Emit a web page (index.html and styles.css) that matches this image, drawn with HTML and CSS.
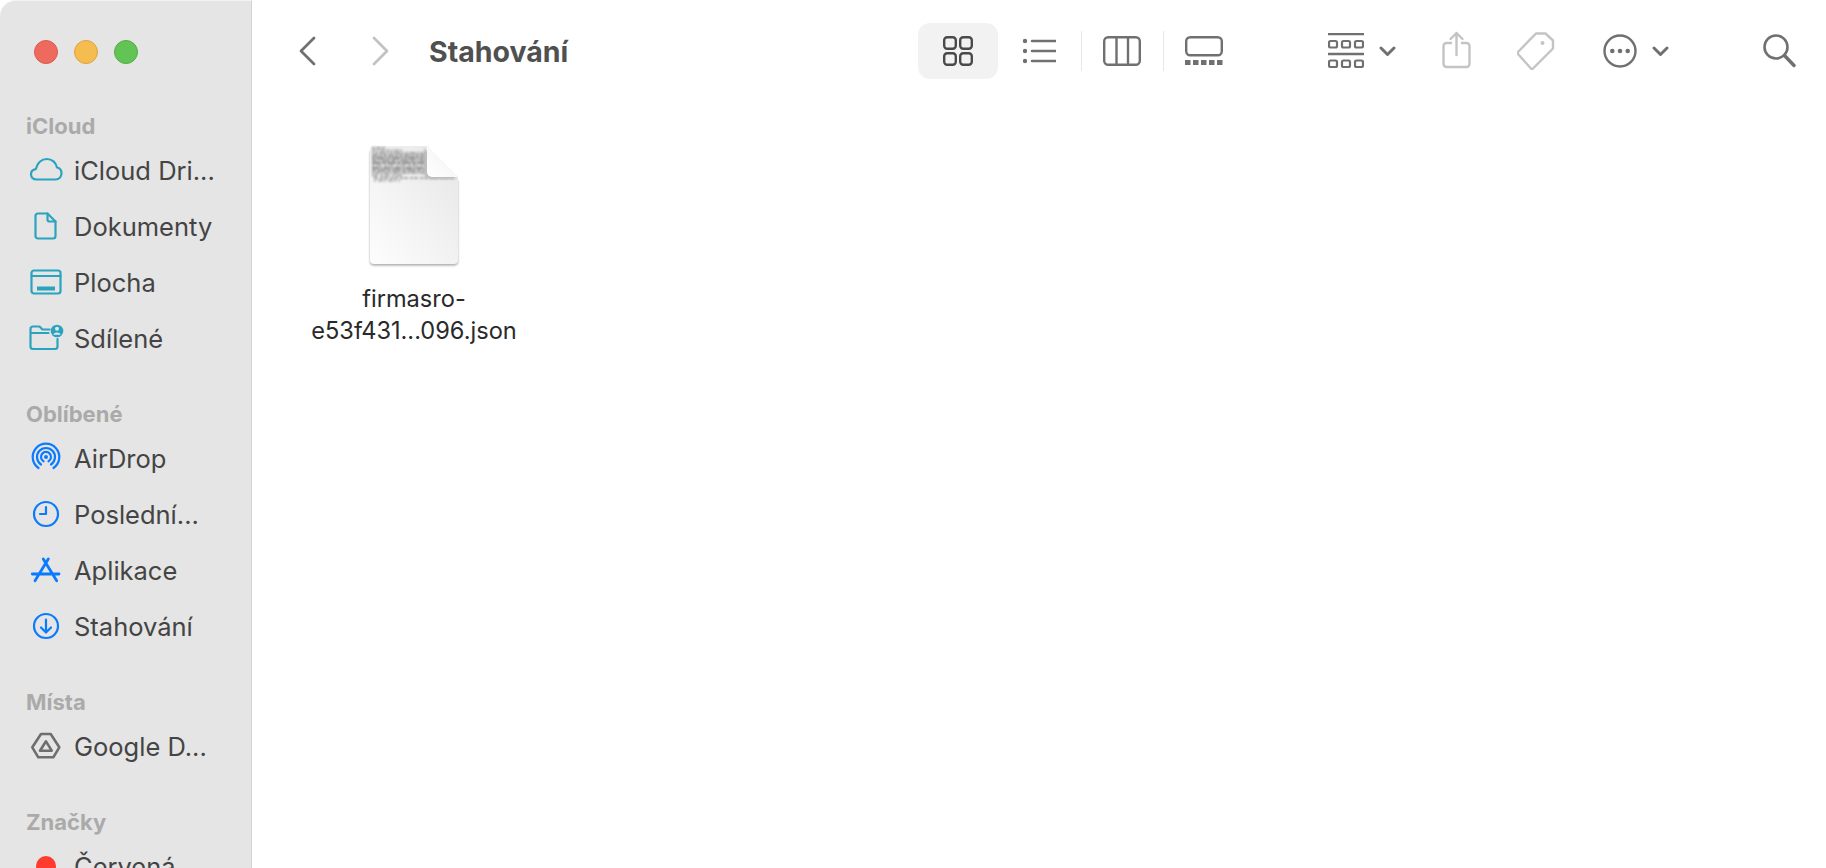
FILE: index.html
```html
<!DOCTYPE html>
<html lang="cs">
<head>
 <meta charset="UTF-8">
 <title>Stahování</title>
 <link rel="stylesheet" href="styles.css">
</head>
<body>
<div class="window">
 <aside class="sidebar">
  <div class="lights">
   <span class="light red"></span>
   <span class="light yellow"></span>
   <span class="light green"></span>
  </div>

  <div class="section">
   <div class="section_title">iCloud</div>
   <div class="row">
    <svg class="side_icon teal" viewBox="0 0 36 36"><path d="M8.5 27.5C5 27.5 3 25 3 22.3c0-2.8 2-4.9 4.8-5.2C9 11 13.5 7 19 7c5 0 9 3.5 10 8.5 2.8.6 4.5 3 4.5 5.8 0 3.5-2.5 6.2-6 6.2z"/></svg>
    <span>iCloud Dri...</span>
   </div>
   <div class="row">
    <svg class="side_icon teal" viewBox="0 0 36 36"><path d="M10 5.5h9.5l8 8V28a2.5 2.5 0 0 1-2.5 2.5H10A2.5 2.5 0 0 1 7.5 28V8A2.5 2.5 0 0 1 10 5.5z"/><path d="M19.5 5.5v6a2 2 0 0 0 2 2h6"/></svg>
    <span>Dokumenty</span>
   </div>
   <div class="row">
    <svg class="side_icon teal" viewBox="0 0 36 36"><rect x="3.5" y="6.5" width="29" height="23" rx="2.5"/><path d="M3.5 12h29"/><rect class="solid" x="9" y="22.500" width="18" height="4"/></svg>
    <span>Plocha</span>
   </div>
   <div class="row">
    <svg class="side_icon teal" viewBox="0 0 36 36"><path d="M2.500 13V9a2.500 2.500 0 0 1 2.500-2.500h6.500l3 3h7M2.500 13h18M2.500 13v13.500A2.500 2.500 0 0 0 5 29h22a2.500 2.500 0 0 0 2.500-2.500V19"/><circle class="solid" cx="29" cy="11" r="6.300"/><circle class="cut" cx="29" cy="8.800" r="2"/><path class="cut" d="M25.200 14.700c.8-1.600 2.200-2.300 3.800-2.300s3 .7 3.800 2.300z"/></svg>
    <span>Sdílené</span>
   </div>
  </div>

  <div class="section">
   <div class="section_title">Oblíbené</div>
   <div class="row">
    <svg class="side_icon blue" viewBox="0 0 36 36"><path d="M10.500 28A13.300 13.300 0 1 1 25.500 28"/><path d="M13 24.500A9 9 0 1 1 23 24.500"/><path d="M15.500 21.300A5 5 0 1 1 20.500 21.300"/><circle class="solid" cx="18" cy="17" r="2"/></svg>
    <span>AirDrop</span>
   </div>
   <div class="row">
    <svg class="side_icon blue" viewBox="0 0 36 36"><circle cx="18" cy="18" r="12"/><path d="M18 11v7h-6"/></svg>
    <span>Poslední...</span>
   </div>
   <div class="row">
    <svg class="side_icon blue wide" viewBox="0 0 36 36"><path d="M15.300 7L28.700 28.700M20.300 7L7 28.700M4.300 22H31"/></svg>
    <span>Aplikace</span>
   </div>
   <div class="row">
    <svg class="side_icon blue" viewBox="0 0 36 36"><circle cx="18" cy="18" r="12"/><path d="M18 11.500V24M13 19.500l5 5 5-5"/></svg>
    <span>Stahování</span>
   </div>
  </div>

  <div class="section">
   <div class="section_title">Místa</div>
   <div class="row">
    <svg class="side_icon gray" viewBox="0 0 36 36"><path d="M13 6h9.700l8.600 13.300-6 10H10.300l-6-10z"/><path d="M18 13.300l5.700 9.400H12z"/></svg>
    <span>Google D...</span>
   </div>
  </div>

  <div class="section">
   <div class="section_title">Značky</div>
   <div class="row">
    <span class="tag_box"><span class="tag_dot"></span></span>
    <span>Červená</span>
   </div>
  </div>
 </aside>

 <main class="content">
  <header class="toolbar">
   <svg class="tool back" width="17" height="30" viewBox="0 0 17 30"><path d="M15 2L2 15l13 13"/></svg>
   <svg class="tool forward" width="17" height="30" viewBox="0 0 17 30"><path d="M2 2l13 13L2 28"/></svg>
   <h1 class="title">Stahování</h1>

   <div class="view_active">
    <svg class="tool dark" width="30" height="30" viewBox="0 0 30 30"><rect x="1.200" y="1.200" width="11.600" height="11.600" rx="3"/><rect x="17.200" y="1.200" width="11.600" height="11.600" rx="3"/><rect x="1.200" y="17.200" width="11.600" height="11.600" rx="3"/><rect x="17.200" y="17.200" width="11.600" height="11.600" rx="3"/></svg>
   </div>
   <svg class="tool view_list" width="34" height="30" viewBox="0 0 34 30"><path d="M10 5h24M10 15h24M10 25h24"/><circle class="fill" cx="3" cy="5" r="2.200"/><circle class="fill" cx="3" cy="15" r="2.200"/><circle class="fill" cx="3" cy="25" r="2.200"/></svg>
   <span class="divider first"></span>
   <svg class="tool" width="38" height="30" viewBox="0 0 38 30"><rect x="1.200" y="1.200" width="35.600" height="27.600" rx="4"/><path d="M13.500 1.200v27.600M25 1.200v27.600"/></svg>
   <span class="divider"></span>
   <svg class="tool" width="38" height="30" viewBox="0 0 38 30"><rect x="1.200" y="1.200" width="35.600" height="18" rx="4"/><g class="fill"><rect x="0" y="24" width="5.500" height="5"/><rect x="8" y="24" width="5.500" height="5"/><rect x="16" y="24" width="5.500" height="5"/><rect x="24" y="24" width="5.500" height="5"/><rect x="32" y="24" width="5.500" height="5"/></g></svg>

   <svg class="tool group_btn" width="36" height="36" viewBox="0 0 36 36"><path d="M0 1h36M0 21h36"/><g class="thin"><rect x="1" y="8" width="8" height="6.500" rx="1.500"/><rect x="14" y="8" width="8" height="6.500" rx="1.500"/><rect x="27" y="8" width="8" height="6.500" rx="1.500"/><rect x="1" y="27.500" width="8" height="6.500" rx="1.500"/><rect x="14" y="27.500" width="8" height="6.500" rx="1.500"/><rect x="27" y="27.500" width="8" height="6.500" rx="1.500"/></g></svg>
   <svg class="tool chevron" width="17" height="11" viewBox="0 0 17 11"><path d="M2 2l6.500 6.500L15 2"/></svg>
   <svg class="tool faint share" width="30" height="40" viewBox="0 0 30 40"><path d="M9 12H4.500A3 3 0 0 0 1.500 15v18a3 3 0 0 0 3 3h20a3 3 0 0 0 3-3V15a3 3 0 0 0-3-3H20"/><path d="M14.500 24V2M8.500 8l6-6 6 6"/></svg>
   <svg class="tool faint tag" width="38" height="38" viewBox="0 0 38 38"><path d="M19 1.500h9.500L36 8.500v8L16 36.500a1.500 1.500 0 0 1-2 0L1 22a1.500 1.500 0 0 1 0-2z"/><circle class="fill" cx="25.500" cy="11" r="2"/></svg>
   <svg class="tool more" width="34" height="34" viewBox="0 0 34 34"><circle cx="17" cy="17" r="15.500"/><circle class="fill" cx="9.300" cy="17" r="2.300"/><circle class="fill" cx="17" cy="17" r="2.300"/><circle class="fill" cx="24.700" cy="17" r="2.300"/></svg>
   <svg class="tool chevron" width="17" height="11" viewBox="0 0 17 11"><path d="M2 2l6.500 6.500L15 2"/></svg>
   <svg class="tool search" width="33" height="34" viewBox="0 0 33 34"><circle cx="13" cy="13" r="11.500"/><path class="thick" d="M21.500 21.500L31 31.500"/></svg>
  </header>

  <div class="files">
   <div class="file">
    <svg class="file_icon" width="92" height="124" viewBox="-1 0 92 124">
     <defs>
      <linearGradient id="paper" x1="1" y1="0" x2="0" y2="1">
       <stop offset="0" stop-color="#e6e6e6"/>
       <stop offset="0.5" stop-color="#f2f2f2"/>
       <stop offset="1" stop-color="#fdfdfd"/>
      </linearGradient>
      <linearGradient id="fold" x1="0" y1="1" x2="1" y2="0">
       <stop offset="0" stop-color="#ffffff"/>
       <stop offset="0.55" stop-color="#f7f7f7"/>
       <stop offset="1" stop-color="#d6d6d6"/>
      </linearGradient>
      <filter id="soft" x="-5%" y="-20%" width="110%" height="140%" color-interpolation-filters="sRGB"><feGaussianBlur stdDeviation="0.8"/></filter>
      <filter id="shade"><feGaussianBlur stdDeviation="1.200"/></filter>
     </defs>
     <path d="M5 4h52l32 32v80a4 4 0 0 1-4 4H5a4 4 0 0 1-4-4V8a4 4 0 0 1 4-4z" fill="#a8a8a8" filter="url(#shade)" transform="translate(0 1.500)"/>
     <path d="M5 2h53l31 31v83a4 4 0 0 1-4 4H5a4 4 0 0 1-4-4V6a4 4 0 0 1 4-4z" fill="url(#paper)"/>
     <g class="file_text" filter="url(#soft)">
      <path d="M3 4h14" stroke-dasharray="3 1 5 1"/>
      <path d="M3 6.500h30" stroke-dasharray="4 1 2 1 5 1"/>
      <path d="M3 9h55" stroke-dasharray="2 1 3 1 7 1"/>
      <path class="strong" d="M3 11.500h55" stroke-dasharray="6 1 3 1 4 1"/>
      <path class="strong" d="M3 14h55" stroke-dasharray="3 1 8 1 2 1"/>
      <path class="strong" d="M3 16.500h55" stroke-dasharray="5 1 2 1 9 1"/>
      <path class="strong" d="M3 19h55" stroke-dasharray="9 1 4 1"/>
      <path d="M3 21.500h55" stroke-dasharray="3 1 6 2"/>
      <path class="strong" d="M3 24h55" stroke-dasharray="7 1 2 1"/>
      <path class="strong" d="M3 26.500h55" stroke-dasharray="4 1 9 1"/>
      <path d="M3 29h55" stroke-dasharray="2 1 5 1"/>
      <path d="M3 31.500h30" stroke-dasharray="6 2 3 1"/>
      <path d="M5 34h80" stroke-dasharray="4 2 3 1"/>
      <path d="M5 36.500h26" stroke-dasharray="2 2 5 1"/>
     </g>
     <path d="M55 4l33 31H61a6 6 0 0 1-6-6z" fill="#bdbdbd" filter="url(#shade)"/>
     <path d="M58 2l31 31H63a5 5 0 0 1-5-5z" fill="url(#fold)"/>
    </svg>
    <div class="file_name">firmasro-<br>e53f431...096.json</div>
   </div>
  </div>
 </main>
</div>
</body>
</html>
```

FILE: styles.css
```css
html, body{
  margin: 0;
  height: 100%;
  background: #fff;
}
body{
  font-family: "Inter", "Liberation Sans", sans-serif;
  color: #444;
  overflow: hidden;
}
.window{
  display: flex;
  height: 868px;
  overflow: hidden;
}

/* sidebar */
.sidebar{
  box-sizing: border-box;
  flex: none;
  width: 252px;
  height: 868px;
  padding: 40px 0 0 26px;
  background: #e5e5e5;
  border-right: 1px solid #d3d3d3;
  border-top: 1px solid #f3f3f3;
  border-top-left-radius: 16px;
  overflow: hidden;
}
.lights{
  display: flex;
  gap: 16px;
  padding-left: 8px;
  margin-top: -1px;
  margin-bottom: 47px;
}
.light{
  box-sizing: border-box;
  width: 24px;
  height: 24px;
  border-radius: 50%;
  border: 1px solid;
}
.red{ background: #ee6a5f; border-color: #d95a4e; }
.yellow{ background: #f5bd4f; border-color: #dfa33a; }
.green{ background: #61c454; border-color: #52ad45; }

.section{
  margin-bottom: 33px;
}
.section_title{
  height: 31px;
  line-height: 31px;
  font-size: 22px;
  font-weight: 700;
  color: #aaa;
}
.row{
  display: flex;
  align-items: center;
  gap: 10px;
  height: 56px;
  padding-left: 2px;
  font-size: 25.5px;
  white-space: nowrap;
}
.side_icon{
  flex: none;
  width: 36px;
  height: 36px;
  fill: none;
  stroke-width: 2.2;
  stroke-linecap: round;
  stroke-linejoin: round;
}
.teal{ stroke: #2aa3bf; }
.blue{ stroke: #0b7bfe; }
.gray{ stroke: #6e6e6e; stroke-width: 2.6; }
.wide{ stroke-width: 2.8; }
.teal .solid{ fill: #2aa3bf; stroke: none; }
.blue .solid{ fill: #0b7bfe; stroke: none; }
.side_icon .cut{ fill: #e5e5e5; stroke: none; }
.tag_box{
  display: flex;
  justify-content: center;
  align-items: center;
  width: 36px;
  height: 36px;
}
.tag_dot{
  width: 20px;
  height: 20px;
  border-radius: 50%;
  background: #ff3b30;
}

/* main area */
.content{
  flex: 1;
  min-width: 0;
}
.toolbar{
  display: flex;
  align-items: center;
  height: 102px;
  padding: 0 30px 0 47px;
}
.tool{
  flex: none;
  fill: none;
  stroke: #707070;
  stroke-width: 2.4;
  stroke-linecap: round;
  stroke-linejoin: round;
}
.tool .fill{
  fill: #707070;
  stroke: none;
}
.tool .thin{ stroke-width: 2.2; }
.dark{ stroke: #4a4a4a; }
.back{ stroke-width: 2.8; }
.forward{
  margin-left: 56px;
  stroke: #c2c2c2;
  stroke-width: 2.8;
}
.title{
  flex: 1;
  margin: 0 0 0 40px;
  font-size: 28.5px;
  font-weight: 700;
  color: #505050;
}
.view_active{
  display: flex;
  justify-content: center;
  align-items: center;
  width: 80px;
  height: 56px;
  border-radius: 12px;
  background: #f2f2f2;
}
.view_list{
  margin-left: 24px;
}
.divider{
  flex: none;
  width: 1px;
  height: 40px;
  margin: 0 21px 0 22px;
  background: #e8e8e8;
}
.divider.first{
  margin-left: 25px;
}
.group_btn{
  margin-left: 105px;
}
.chevron{
  margin-left: 15px;
  stroke-width: 3;
}
.faint{
  stroke: #c4c4c4;
}
.faint .fill{
  fill: #c4c4c4;
}
.share{
  margin-left: 46px;
}
.tag{
  margin-left: 45px;
}
.more{
  margin-left: 48px;
}
.search{
  margin-left: 94px;
  stroke-width: 2.6;
}
.search .thick{
  stroke-width: 3.4;
}

/* icon view */
.files{
  display: flex;
  padding: 42px 0 0 48px;
}
.file{
  width: 228px;
  text-align: center;
}
.file_icon{
  display: block;
  margin: 0 auto;
}
.file_text{
  fill: none;
  stroke: #a8a8a8;
  stroke-width: 1.8;
}
.file_text .strong{
  stroke: #8e8e8e;
}
.file_name{
  margin-top: 15px;
  font-size: 23.6px;
  line-height: 32px;
  color: #2a2a2a;
}
```
